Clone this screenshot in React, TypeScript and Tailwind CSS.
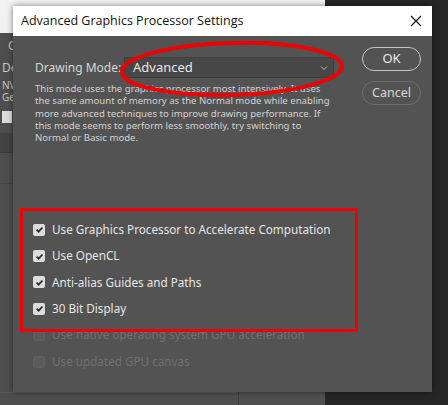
import React from 'react';

const desc = [
  'This mode uses the graphics processor most intensively.  It uses',
  'the same amount of memory as the Normal mode while enabling',
  'more advanced techniques to improve drawing performance.  If',
  'this mode seems to perform less smoothly, try switching to',
  'Normal or Basic mode.',
];

const options = [
  { label: 'Use Graphics Processor to Accelerate Computation', on: true },
  { label: 'Use OpenCL', on: true },
  { label: 'Anti-alias Guides and Paths', on: true },
  { label: '30 Bit Display', on: true },
  { label: 'Use native operating system GPU acceleration', on: false },
  { label: 'Use updated GPU canvas', on: false },
];

const Check = ({ on }: { on: boolean }) =>
  on ? (
    <span className="flex items-center justify-center w-[12px] h-[12px] rounded-[2px] bg-[#dcdcdc]">
      <svg width="9" height="9" viewBox="0 0 10 10">
        <path d="M1.8 5.2 L4 7.4 L8.3 2.8" fill="none" stroke="#2a2a2a" strokeWidth="1.9" />
      </svg>
    </span>
  ) : (
    <span className="block w-[12px] h-[12px] rounded-[2px] bg-[#5b5b5b] border border-[#606060]" />
  );

export default function App() {
  return (
    <div
      className="relative w-[448px] h-[405px] overflow-hidden bg-[#262626]"
      style={{ fontFamily: '"Noto Sans", "Open Sans", sans-serif' }}
    >
      {/* parent window behind */}
      <div className="absolute left-0 top-0 w-[325px] h-[405px] flex flex-col bg-[#4e4e4e]">
        <div className="h-[33px] bg-[#f2f2f2]" />
        <div className="flex flex-col text-[#c8c8c8] pl-[2px]">
          <span className="mt-[6px] pl-[6px] text-[12px] leading-[14px]">G</span>
          <span className="mt-[8px] text-[12px] leading-[14px]">De</span>
          <span className="mt-[4px] text-[10px] leading-[12px]">NV</span>
          <span className="text-[10px] leading-[12px]">Gel</span>
          <span className="mt-[8px] w-[10px] h-[12px] bg-[#dcdcdc]" />
        </div>
        <div className="mt-[10px] h-[20px] bg-[#444444] border-b border-[#3a3a3a]" />
        <div className="mt-[30px] h-px bg-[#444444]" />
        <div className="flex-1" />
        <div className="h-[13px] flex">
          <div className="w-[238px] bg-[#4e4e4e] border-t border-[#5a5a5a]" />
          <div className="w-px bg-[#3e3e3e]" />
          <div className="flex-1 bg-[#505050]" />
        </div>
      </div>

      {/* dialog */}
      <div className="absolute left-[13px] top-[6px] w-[419px] h-[386px] flex flex-col bg-[#535353] shadow-[0_0_6px_rgba(0,0,0,0.5)]">
        <div className="h-[30px] flex items-center justify-between bg-white pl-[8px] pr-[8px]">
          <span className="text-[12.5px] text-[#111]" style={{ fontFamily: '"Open Sans", "Noto Sans", sans-serif' }}>
            Advanced Graphics Processor Settings
          </span>
          <svg width="12" height="12" viewBox="0 0 12 12" className="mr-[2px]">
            <path d="M1 1 L11 11 M11 1 L1 11" stroke="#111" strokeWidth="1.1" />
          </svg>
        </div>

        <div className="flex flex-1">
          <div className="flex-1 flex flex-col pl-[22px] pt-[21px]">
            <div className="flex items-center h-[21px]">
              <span className="w-[89px] text-[12px] text-[#d6d6d6]">Drawing Mode:</span>
              <div className="w-[210px] h-[21px] flex items-center justify-between bg-[#474747] border border-[#3f3f3f] pl-[8px] pr-[5px]">
                <span className="text-[13px] text-[#e8e8e8]">Advanced</span>
                <svg width="8" height="6" viewBox="0 0 8 6">
                  <path d="M1 1.5 L4 4.5 L7 1.5" fill="none" stroke="#bdbdbd" strokeWidth="1" />
                </svg>
              </div>
            </div>
            <p className="mt-[5px] text-[9.6px] leading-[12.3px] text-[#d2d2d2]">
              {desc.map((l, i) => (
                <React.Fragment key={i}>
                  {l}
                  <br />
                </React.Fragment>
              ))}
            </p>
            <div className="mt-[72px] -ml-[2px] flex flex-col">
              {options.map((o) => (
                <div key={o.label} className="h-[26.4px] flex items-center gap-[7px]">
                  <Check on={o.on} />
                  <span className={`text-[11.7px] ${o.on ? 'text-[#e6e6e6]' : 'text-[#707070]'}`}>{o.label}</span>
                </div>
              ))}
            </div>
          </div>

          <div className="w-[59px] mr-[11px] pt-[11px] flex flex-col gap-[10px]">
            <button className="h-[24px] rounded-full border border-[#c4c4c4] text-[13px] text-[#e8e8e8]">OK</button>
            <button className="h-[24px] rounded-full border border-[#6e6e6e] text-[12.5px] text-[#d8d8d8]">Cancel</button>
          </div>
        </div>

        {/* red annotations */}
        <div className="absolute left-[7px] top-[202px] w-[338px] h-[124px] border-[3px] border-[#f00000]" />
        <svg className="absolute left-[104px] top-[33px]" width="230" height="62" viewBox="0 0 230 62">
          <ellipse cx="115" cy="30" rx="110" ry="26" fill="none" stroke="#ee0000" strokeWidth="4" transform="rotate(-1.5 115 30)" />
        </svg>
      </div>
    </div>
  );
}
